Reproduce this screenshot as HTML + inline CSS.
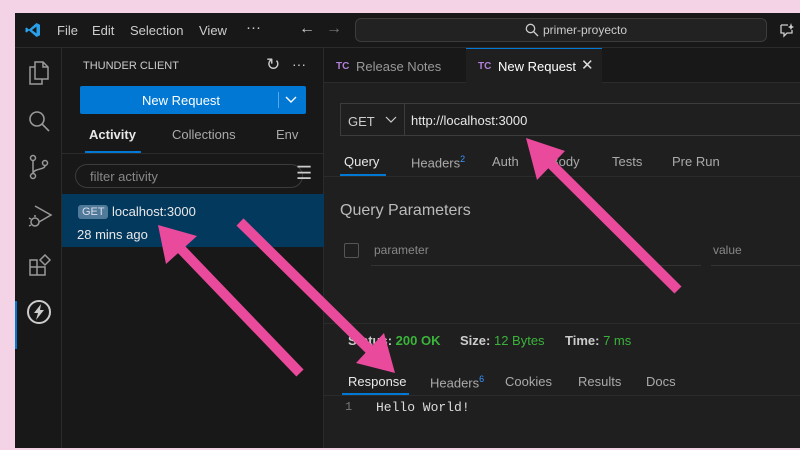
<!DOCTYPE html>
<html><head><style>
*{margin:0;padding:0;box-sizing:border-box}
body{width:800px;height:450px;background:#f4d3e6;position:relative;overflow:hidden;font-family:"Liberation Sans",sans-serif;color:#ccc}
.win{position:absolute;left:15px;top:13px;width:785px;height:435px;background:#1f1f1f;overflow:hidden}
.abs{position:absolute}
.t{position:absolute;white-space:nowrap}
</style></head><body>
<div class="win">
 <div class="abs" style="left:0;top:0;width:785px;height:35px;background:#181818;border-bottom:1px solid #2b2b2b"></div>
 <svg class="abs" style="left:10px;top:9px" width="16" height="16" viewBox="0 0 16 16"><path d="M11.5 1 L15 2.7 V13.3 L11.5 15 L4 8.5 L1.5 10.5 L0.5 10 V6 L1.5 5.5 L4 7.5Z M11.5 4.6 L7 8 L11.5 11.4Z" fill="#2a9fea" fill-rule="evenodd"/></svg>
 <div class="t" style="left:42px;top:10px;font-size:13px;color:#ccc">File</div>
 <div class="t" style="left:77px;top:10px;font-size:13px">Edit</div>
 <div class="t" style="left:115px;top:10px;font-size:13px">Selection</div>
 <div class="t" style="left:184px;top:10px;font-size:13px">View</div>
 <div class="t" style="left:231px;top:6px;font-size:15px">···</div>
 <div class="t" style="left:284px;top:7px;font-size:16px;color:#ccc">←</div>
 <div class="t" style="left:311px;top:7px;font-size:16px;color:#777">→</div>
 <div class="abs" style="left:340px;top:5px;width:412px;height:24px;border:1px solid #3c3c3c;border-radius:6px;background:#222"></div>
 <svg class="abs" style="left:510px;top:10px" width="14" height="14"><circle cx="5.5" cy="5.5" r="4.2" stroke="#ccc" fill="none" stroke-width="1.3"/><path d="M8.5 8.5 L13 13" stroke="#ccc" stroke-width="1.3"/></svg>
 <div class="t" style="left:528px;top:10px;font-size:12px;color:#ccc">primer-proyecto</div>
 <svg class="abs" style="left:764px;top:9px" width="16" height="16"><path d="M2 3 H9 M2 3 V11 H5 V14 L8 11 H13 V8" stroke="#ccc" fill="none" stroke-width="1.3"/><path d="M12 1 L13 4 L15 5 L13 6 L12 8 L11 6 L9 5 L11 4Z" fill="#ccc"/></svg>
 <!-- activity bar -->
 <div class="abs" style="left:0;top:35px;width:47px;height:400px;background:#181818;border-right:1px solid #2b2b2b"></div>
 <svg class="abs" style="left:12px;top:47px" width="24" height="26" fill="none" stroke="#999" stroke-width="1.5"><path d="M8 2 H16 L21 7 V19 H8Z M16 2 V7 H21"/><path d="M8 7 H3 V24 H15 V19"/></svg>
 <svg class="abs" style="left:12px;top:96px" width="24" height="24" fill="none" stroke="#999" stroke-width="1.6"><circle cx="10" cy="10" r="7"/><path d="M15 15 L22 22"/></svg>
 <svg class="abs" style="left:13px;top:141px" width="22" height="26" fill="none" stroke="#999" stroke-width="1.5"><circle cx="5" cy="4" r="2.5"/><circle cx="5" cy="22" r="2.5"/><circle cx="17" cy="9" r="2.5"/><path d="M5 6.5 V19.5 M17 11.5 C17 16 7 14 5 19"/></svg>
 <svg class="abs" style="left:12px;top:190px" width="26" height="26" fill="none" stroke="#999" stroke-width="1.5"><path d="M8 3 L24 12 L12 19"/><circle cx="8" cy="19" r="4"/><path d="M2 15 L4 16 M2 23 L4 22 M8 14 V12"/></svg>
 <svg class="abs" style="left:13px;top:241px" width="24" height="24" fill="none" stroke="#999" stroke-width="1.5"><path d="M2 6 H9 V13 H2Z M2 13 H9 V21 H2Z M9 13 H17 V21 H9Z M17 1 L22 6 L17 11 L12 6Z"/></svg>
 <div class="abs" style="left:0;top:288px;width:2px;height:48px;background:#0078d4"></div>
 <svg class="abs" style="left:11px;top:286px" width="26" height="26"><circle cx="13" cy="13" r="11" stroke="#ccc" stroke-width="2" fill="none"/><path d="M15 5 L8 14 H12 L10 21 L18 11 H14Z" fill="#ccc"/></svg>
 <!-- sidebar -->
 <div class="abs" style="left:47px;top:35px;width:262px;height:400px;background:#181818;border-right:1px solid #2b2b2b"></div>
 <div class="t" style="left:68px;top:47px;font-size:11px;color:#ccc">THUNDER CLIENT</div>
 <div class="t" style="left:251px;top:42px;font-size:17px;color:#ccc">↻</div>
 <div class="t" style="left:277px;top:43px;font-size:14px">···</div>
 <div class="abs" style="left:65px;top:73px;width:226px;height:28px;background:#0078d4;border-radius:2px"></div>
 <div class="t" style="left:127px;top:80px;font-size:13px;color:#fff">New Request</div>
 <div class="abs" style="left:263px;top:79px;width:1px;height:16px;background:#5aa5e6"></div>
 <svg class="abs" style="left:270px;top:82px" width="12" height="10"><path d="M1 2 L6 7 L11 2" stroke="#fff" fill="none" stroke-width="1.4"/></svg>
 <div class="t" style="left:74px;top:114px;font-size:13px;font-weight:bold;color:#e8e8e8">Activity</div>
 <div class="abs" style="left:70px;top:138px;width:56px;height:2px;background:#0078d4"></div>
 <div class="t" style="left:157px;top:114px;font-size:13px;color:#aaa">Collections</div>
 <div class="t" style="left:261px;top:114px;font-size:13px;color:#aaa">Env</div>
 <div class="abs" style="left:47px;top:140px;width:262px;height:1px;background:#2b2b2b"></div>
 <div class="abs" style="left:60px;top:151px;width:228px;height:24px;border:1px solid #3c3c3c;border-radius:12px"></div>
 <div class="t" style="left:75px;top:156px;font-size:13px;color:#888">filter activity</div>
 <div class="t" style="left:281px;top:150px;font-size:18px;color:#ccc">☰</div>
 <div class="abs" style="left:47px;top:181px;width:262px;height:53px;background:#04395e"></div>
 <div class="abs" style="left:63px;top:192px;width:30px;height:14px;background:#4f7a99;border-radius:3px"></div>
 <div class="t" style="left:67px;top:193px;font-size:11px;color:#dde">GET</div>
 <div class="t" style="left:97px;top:191px;font-size:13px;color:#e8e8e8">localhost:3000</div>
 <div class="t" style="left:62px;top:214px;font-size:13px;color:#e8e8e8">28 mins ago</div>
 <!-- tabs -->
 <div class="abs" style="left:309px;top:35px;width:476px;height:35px;background:#181818;border-bottom:1px solid #2b2b2b"></div>
 <div class="abs" style="left:451px;top:35px;width:136px;height:36px;background:#1f1f1f;border-top:1px solid #0078d4"></div>
 <div class="t" style="left:321px;top:48px;font-size:10px;font-weight:bold;color:#b180d7">TC</div>
 <div class="t" style="left:341px;top:46px;font-size:13px;color:#999">Release Notes</div>
 <div class="t" style="left:463px;top:48px;font-size:10px;font-weight:bold;color:#b180d7">TC</div>
 <div class="t" style="left:483px;top:46px;font-size:13px;color:#fff">New Request</div>
 <div class="t" style="left:566px;top:43px;font-size:15px;color:#ddd">✕</div>
 <!-- url -->
 <div class="abs" style="left:325px;top:90px;width:470px;height:33px;border:1px solid #3c3c3c;background:#1f1f1f"></div>
 <div class="abs" style="left:389px;top:90px;width:1px;height:33px;background:#3c3c3c"></div>
 <div class="t" style="left:333px;top:101px;font-size:13px;color:#ccc">GET</div>
 <svg class="abs" style="left:370px;top:103px" width="12" height="8"><path d="M1 1 L6 6 L11 1" stroke="#ccc" fill="none" stroke-width="1.2"/></svg>
 <div class="t" style="left:396px;top:100px;font-size:13px;color:#e8e8e8">http://localhost:3000</div>
 <div class="t" style="left:329px;top:141px;font-size:13px;color:#e8e8e8">Query</div>
 <div class="abs" style="left:325px;top:161px;width:46px;height:2px;background:#0078d4"></div>
 <div class="abs" style="left:309px;top:163px;width:476px;height:1px;background:#2b2b2b"></div>
 <div class="t" style="left:396px;top:141px;font-size:13px;color:#aaa">Headers<sup style="color:#3794ff;font-size:9px">2</sup></div>
 <div class="t" style="left:477px;top:141px;font-size:13px;color:#aaa">Auth</div>
 <div class="t" style="left:535px;top:141px;font-size:13px;color:#aaa">Body</div>
 <div class="t" style="left:597px;top:141px;font-size:13px;color:#aaa">Tests</div>
 <div class="t" style="left:657px;top:141px;font-size:13px;color:#aaa">Pre Run</div>
 <div class="t" style="left:325px;top:189px;font-size:16px;color:#bbb">Query Parameters</div>
 <div class="abs" style="left:329px;top:230px;width:15px;height:15px;border:1px solid #555;border-radius:2px"></div>
 <div class="t" style="left:359px;top:230px;font-size:12px;color:#888">parameter</div>
 <div class="abs" style="left:356px;top:252px;width:330px;height:1px;background:#333"></div>
 <div class="t" style="left:698px;top:230px;font-size:12px;color:#888">value</div>
 <div class="abs" style="left:696px;top:252px;width:90px;height:1px;background:#333"></div>
 <div class="abs" style="left:309px;top:310px;width:476px;height:1px;background:#2b2b2b"></div>
 <div class="t" style="left:333px;top:320px;font-size:13px;font-weight:bold;color:#ccc">Status: <span style="color:#3bb33b">200 OK</span></div>
 <div class="t" style="left:445px;top:320px;font-size:13px;font-weight:bold;color:#ccc">Size: <span style="color:#3bb33b;font-weight:normal">12 Bytes</span></div>
 <div class="t" style="left:550px;top:320px;font-size:13px;font-weight:bold;color:#ccc">Time: <span style="color:#3bb33b;font-weight:normal">7 ms</span></div>
 <div class="t" style="left:333px;top:361px;font-size:13px;color:#e8e8e8">Response</div>
 <div class="abs" style="left:327px;top:380px;width:67px;height:2px;background:#0078d4"></div>
 <div class="abs" style="left:309px;top:382px;width:476px;height:1px;background:#2b2b2b"></div>
 <div class="t" style="left:415px;top:361px;font-size:13px;color:#aaa">Headers<sup style="color:#3794ff;font-size:9px">6</sup></div>
 <div class="t" style="left:490px;top:361px;font-size:13px;color:#aaa">Cookies</div>
 <div class="t" style="left:563px;top:361px;font-size:13px;color:#aaa">Results</div>
 <div class="t" style="left:631px;top:361px;font-size:13px;color:#aaa">Docs</div>
 <div class="t" style="left:330px;top:387px;font-size:12px;font-family:'Liberation Mono',monospace;color:#777">1</div>
 <div class="t" style="left:361px;top:387px;font-size:13px;font-family:'Liberation Mono',monospace;color:#ddd">Hello World!</div>
</div>
<svg class="abs" style="left:0;top:0" width="800" height="450">
 <g stroke="#ea4a9c" stroke-width="10" stroke-linecap="butt" fill="#ea4a9c">
  <path d="M300 373 L180 248"/>
  <path d="M240 222 L370 350"/>
  <path d="M678 290 L545 158"/>
 </g>
 <g fill="#ea4a9c">
  <path d="M158 225 L197 236 L166 264Z"/>
  <path d="M395 373 L356 363 L384 333Z"/>
  <path d="M526 138 L565 151 L537 180Z"/>
 </g>
</svg>
</body></html>
